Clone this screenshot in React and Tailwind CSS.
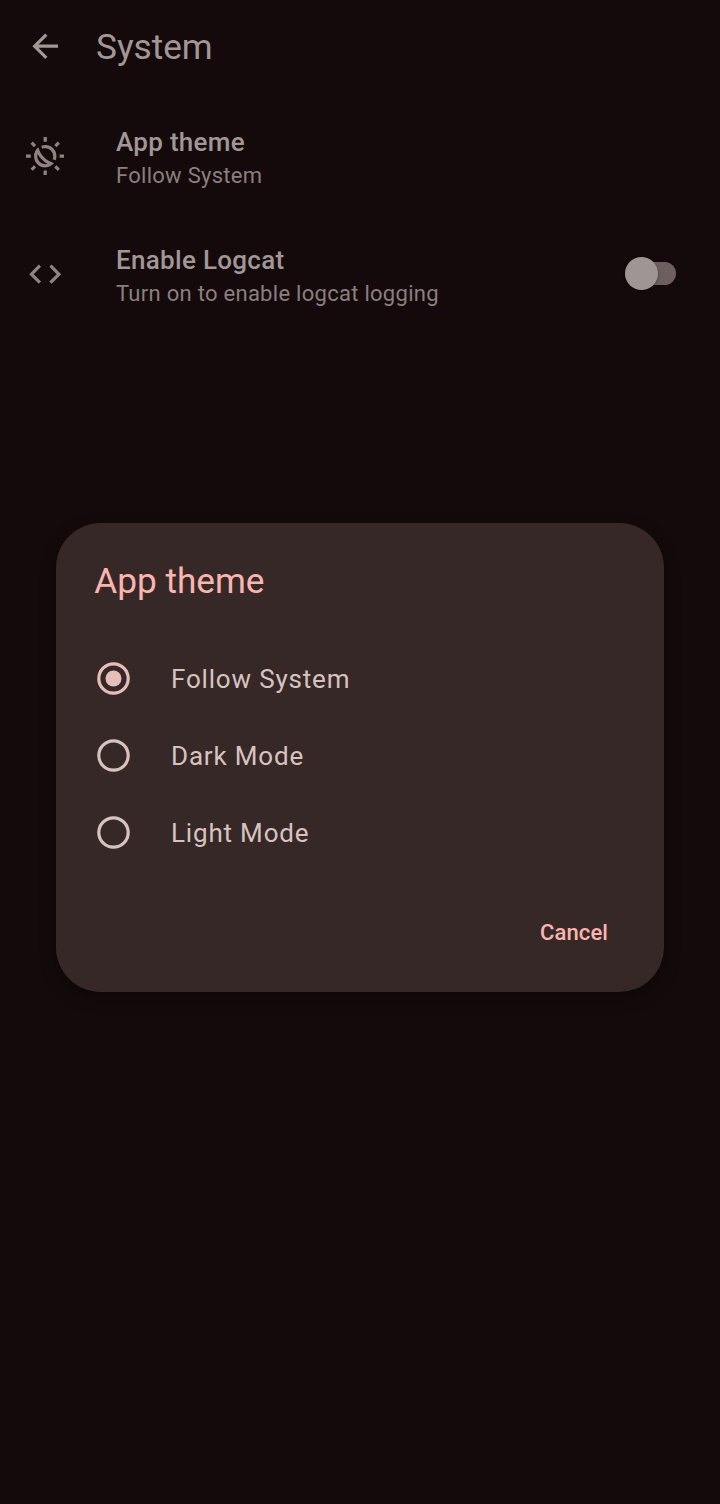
import React from "react";

function BackIcon() {
  return (
    <svg viewBox="0 0 24 24" className="size-[38.4px] shrink-0 fill-[#a19796]">
      <path d="M20 11H7.83l5.59-5.59L12 4l-8 8 8 8 1.41-1.41L7.83 13H20v-2z" />
    </svg>
  );
}

function ThemeIcon() {
  return (
    <svg viewBox="0 -960 960 960" className="size-[38.4px] shrink-0 fill-[#8f8382]">
      <path d="M396-396q-32-32-58.5-67T289-537q-5 14-6.5 28.5T281-480q0 83 58 141t141 58q14 0 28.5-2t28.5-6q-39-22-74-48.5T396-396Zm57-56q51 51 114 87.5T702-308q-40 51-98 79.5T481-200q-117 0-198.5-81.5T201-480q0-65 28.5-123t79.5-98q20 72 56.5 135T453-452Zm290 72q-20-5-39.5-11T665-405q8-18 11.5-36.5T680-480q0-83-58.5-141.5T480-680q-20 0-38.5 3.5T405-665q-8-19-13.5-38T381-742q24-9 49-13.5t51-4.5q117 0 198.5 81.5T761-480q0 26-4.5 51T743-380ZM440-840v-120h80v120h-80Zm0 840v-120h80V0h-80Zm323-706-57-57 85-84 57 56-85 85ZM169-113l-57-56 85-85 57 57-85 84Zm671-327v-80h120v80H840ZM0-440v-80h120v80H0Zm791 328-85-85 57-57 84 85-56 57ZM197-706l-84-85 56-57 85 85-57 57Z" />
    </svg>
  );
}

function CodeIcon() {
  return (
    <svg viewBox="0 0 24 24" className="size-[38.4px] shrink-0 fill-[#8f8382]">
      <path d="M9.4 16.6 4.8 12l4.6-4.6L8 6l-6 6 6 6 1.4-1.4zm5.2 0 4.6-4.6-4.6-4.6L16 6l6 6-6 6-1.4-1.4z" />
    </svg>
  );
}

function Switch() {
  return (
    <div className="mb-px flex h-[33px] w-[51px] items-center" role="switch" aria-checked="false">
      <div className="flex h-[23px] w-full items-center rounded-full bg-[#6d5f5f]">
        <div className="size-[32.6px] shrink-0 rounded-full bg-[#9f9593] shadow-[0_1px_3px_rgba(0,0,0,0.35)]" />
      </div>
    </div>
  );
}

function SettingRow({ icon, title, summary, children }) {
  return (
    <div className="flex h-[118px] items-center pr-[43.8px] pl-[26px]">
      {icon}
      <div className="ml-[51.6px] flex flex-1 flex-col pt-[5px]">
        <span className="text-[26px] leading-[34px] font-medium tracking-[0.3px] text-[#a19796]">{title}</span>
        <span className="text-[22px] leading-[33px] tracking-[0.28px] text-[#8b7f7e]">{summary}</span>
      </div>
      {children}
    </div>
  );
}

function RadioOption({ label, selected }) {
  return (
    <div className="flex h-[77px] items-center" role="radio" aria-checked={selected}>
      <svg viewBox="0 0 33 33" className="mb-px size-[33px] shrink-0">
        <circle
          cx="16.5"
          cy="16.5"
          r="14.7"
          strokeWidth="3.2"
          className={selected ? "fill-none stroke-[#e7bdb9]" : "fill-none stroke-[#d8c2c0]"}
        />
        {selected && <circle cx="16.5" cy="16.5" r="8" className="fill-[#e7bdb9]" />}
      </svg>
      <span className="ml-[41px] text-[26px] leading-[38px] tracking-[0.82px] text-[#d8c2c0]">{label}</span>
    </div>
  );
}

export default function App() {
  return (
    <div className="grid h-[1504px] w-[720px] overflow-hidden bg-[#140a0b] font-[Roboto,sans-serif]">
      <main className="col-start-1 row-start-1">
        <header className="flex h-[97px] items-center gap-[31.6px] pb-[5px] pl-[26px]">
          <BackIcon />
          <h1 className="pt-[2px] text-[35.2px] leading-[44px] text-[#a19796]">System</h1>
        </header>
        <SettingRow icon={<ThemeIcon />} title="App theme" summary="Follow System" />
        <SettingRow icon={<CodeIcon />} title="Enable Logcat" summary="Turn on to enable logcat logging">
          <Switch />
        </SettingRow>
      </main>
      <section
        role="dialog"
        className="z-10 col-start-1 row-start-1 mt-[523px] ml-14 flex h-[469px] w-[608px] flex-col rounded-[44.8px] bg-[#362827] pt-9 shadow-[0_6px_16px_rgba(0,0,0,0.35)]"
      >
        <h2 className="pl-[38.2px] text-[35.2px] leading-[44px] text-[#fbb4af]">App theme</h2>
        <div className="mt-[37px] pl-[41px]" role="radiogroup">
          <RadioOption label="Follow System" selected />
          <RadioOption label="Dark Mode" selected={false} />
          <RadioOption label="Light Mode" selected={false} />
        </div>
        <button className="mt-[46px] mr-14 self-end text-[22px] leading-[32px] font-medium tracking-[0.1px] text-[#fbb4af]">
          Cancel
        </button>
      </section>
    </div>
  );
}
